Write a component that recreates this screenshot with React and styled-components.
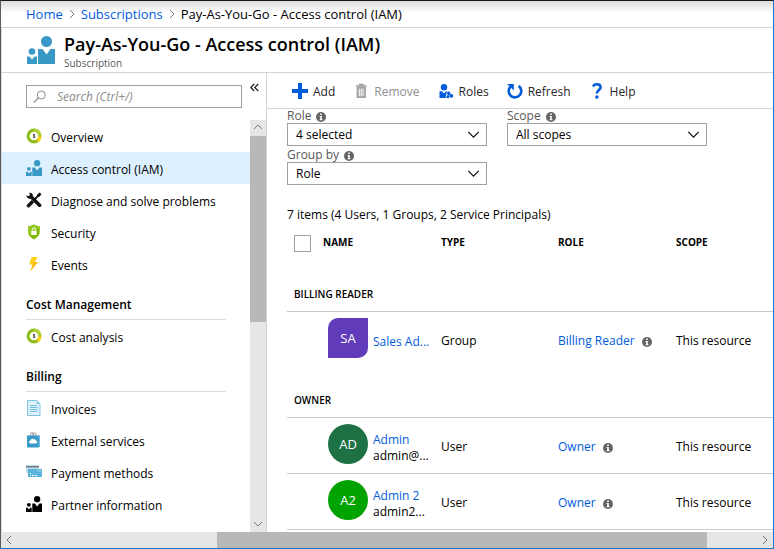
import React from 'react';
import styled, { createGlobalStyle, css } from 'styled-components';

const GlobalStyle = createGlobalStyle`
  *, *::before, *::after { box-sizing: border-box; }
  body {
    margin: 0;
    font-family: "Open Sans", "Noto Sans", sans-serif;
    font-size: 12px;
    line-height: 16px;
    color: #000;
    background: #fff;
  }
  button, input, select { font: inherit; color: inherit; }
  a { color: #015cda; text-decoration: none; }
`;

const Window = styled.div`
  display: flex;
  flex-direction: column;
  height: 100vh;
  border-top: 1px solid #1c161b;
  border-left: 1px solid #5b5b5e;
  border-right: 1px solid #1979ca;
  border-bottom: 1px solid #1979ca;
  background: #fff;
`;

const Breadcrumb = styled.nav`
  display: flex;
  align-items: center;
  gap: 4px;
  flex: none;
  height: 27px;
  padding-left: 25px;
  border-bottom: 1px solid #d4d4d4;
  background: linear-gradient(#dcdcdc, #fff 12px);
  font-size: 13px;
`;

const Header = styled.header`
  display: flex;
  align-items: center;
  gap: 9px;
  flex: none;
  height: 45px;
  padding-left: 25px;
  border-bottom: 1px solid #d4d4d4;
  border-left: 1px solid #d4d4d4;
`;

const Title = styled.h1`
  margin: 0;
  font-size: 18px;
  line-height: 25px;
  font-weight: 600;
`;

const Subtitle = styled.div`
  font-size: 10px;
  line-height: 12px;
  color: #595959;
`;

const Body = styled.div`
  display: flex;
  flex: 1;
  min-height: 0;
  border-left: 1px solid #d4d4d4;
`;

const Sidebar = styled.aside`
  display: flex;
  flex-direction: column;
  flex: none;
  width: 265px;
  border-right: 1px solid #d4d4d4;
`;

const SearchRow = styled.div`
  display: flex;
  align-items: flex-start;
  gap: 5px;
  flex: none;
  height: 47px;
  padding: 12px 5px 0 24px;
`;

const SearchBox = styled.label`
  display: flex;
  align-items: center;
  gap: 10px;
  flex: 1;
  min-width: 0;
  height: 23px;
  padding-left: 6px;
  border: 1px solid #a0a0a0;
`;

const SearchInput = styled.input`
  flex: 1;
  min-width: 0;
  padding: 0;
  border: 0;
  outline: 0;
  background: transparent;
  font-style: italic;
  &::placeholder { color: #8b8b8b; opacity: 1; }
`;

const IconButton = styled.button`
  display: flex;
  align-items: center;
  justify-content: center;
  width: 14px;
  height: 4px;
  padding: 0;
  border: 0;
  background: none;
`;

const MenuArea = styled.div`
  display: flex;
  flex: 1;
  min-height: 0;
`;

const Menu = styled.nav`
  flex: 1;
  min-width: 0;
  overflow: hidden;
`;

const MenuItem = styled.a`
  display: flex;
  align-items: center;
  gap: 9px;
  height: 32px;
  padding-left: 24px;
  color: #000;
  background: ${(p) => (p.$active ? '#dcf0ff' : 'transparent')};
  svg { flex: none; }
  span { padding-top: 4px; }
`;

const MenuHeading = styled.h2`
  height: 40px;
  margin: 0 24px;
  padding-top: 17px;
  font-size: 12px;
  line-height: 16px;
  font-weight: 600;
  &::after {
    content: "";
    display: block;
    margin-top: 6px;
    border-top: 1px solid #d9dadb;
  }
`;

const Scrollbar = styled.div`
  display: flex;
  flex: none;
  flex-direction: ${(p) => (p.$horizontal ? 'row' : 'column')};
  ${(p) => (p.$horizontal ? css`height: 16px;` : css`width: 16px;`)}
  background: #e6e6e6;
`;

const ScrollButton = styled.button`
  display: flex;
  align-items: center;
  justify-content: center;
  flex: none;
  width: 16px;
  height: 16px;
  padding: 0;
  border: 0;
  background: none;
`;

const Space = styled.div`
  flex: ${(p) => p.$grow} 1 0;
`;

const Thumb = styled(Space)`
  background: #b8b8b8;
`;

const Main = styled.main`
  display: flex;
  flex-direction: column;
  flex: 1;
  min-width: 0;
  overflow: hidden;
`;

const Toolbar = styled.div`
  display: flex;
  align-items: center;
  gap: 18px;
  flex: none;
  height: 36px;
  padding-left: 25px;
  border-bottom: 1px solid #d4d4d4;
`;

const Command = styled.button`
  display: flex;
  align-items: center;
  gap: 5px;
  padding: 0;
  border: 0;
  background: none;
  color: #252525;
  white-space: nowrap;
  span { padding-top: 2px; }
  &:disabled { color: #8f8f8f; }
`;

const Filters = styled.form`
  display: grid;
  grid-template-columns: 200px 200px;
  column-gap: 20px;
  flex: none;
  padding-left: 20px;
`;

const Field = styled.div`
  grid-column: ${(p) => p.$column};
  height: 39px;
`;

const FieldLabel = styled.label`
  display: flex;
  align-items: center;
  gap: 5px;
  height: 14px;
  color: #595959;
  svg { margin-top: 2px; }
`;

const SelectBox = styled.div`
  display: grid;
  align-items: center;
  > * { grid-area: 1 / 1; }
  > svg { justify-self: end; margin-right: 7px; pointer-events: none; }
`;

const Select = styled.select`
  appearance: none;
  width: 100%;
  height: 23px;
  padding: 0 24px 0 8px;
  border: 1px solid #a0a0a0;
  border-radius: 0;
  background: #fff;
`;

const Summary = styled.p`
  flex: none;
  margin: 0;
  padding: 20px 0 7px 20px;
`;

const TableWrap = styled.div`
  flex: none;
  padding-left: 20px;
`;

const Table = styled.table`
  width: 100%;
  table-layout: fixed;
  border-collapse: collapse;
  col:nth-child(1) { width: 36px; }
  col:nth-child(2) { width: 118px; }
  col:nth-child(3) { width: 117px; }
  col:nth-child(4) { width: 118px; }
`;

const HeadCell = styled.th`
  height: 31px;
  padding: 4px 0 0;
  text-align: left;
  vertical-align: top;
  font-size: 10px;
  font-weight: 700;
  white-space: nowrap;
`;

const Checkbox = styled.input`
  appearance: none;
  display: block;
  width: 17px;
  height: 17px;
  margin: 1px 0 0 7px;
  border: 1px solid #a0a0a0;
  background: #fff;
`;

const GroupCell = styled.th`
  height: 50px;
  padding: 0 0 9px 7px;
  border-bottom: 1px solid #c8c8c8;
  text-align: left;
  vertical-align: bottom;
  font-size: 10px;
  font-weight: 600;
`;

const Row = styled.tr`
  border-bottom: ${(p) => (p.$line ? '1px solid #c8c8c8' : '0')};
`;

const Cell = styled.td`
  height: 56px;
  padding: 4px 0 0;
  white-space: nowrap;
`;

const NameCell = styled(Cell)`
  padding: 0 0 2px 5px;
`;

const Principal = styled.div`
  display: flex;
  align-items: center;
  gap: 5px;
`;

const PrincipalText = styled.div`
  display: flex;
  flex-direction: column;
  padding-top: 7px;
`;

const Avatar = styled.div`
  display: flex;
  align-items: center;
  justify-content: center;
  flex: none;
  width: 40px;
  height: 40px;
  border-radius: ${(p) => (p.$group ? '10px 0 10px 0' : '50%')};
  background: ${(p) => p.$color};
  color: #fff;
  font-size: 13px;
`;

const RoleLine = styled.div`
  display: flex;
  align-items: center;
  gap: 7px;
  svg { margin-top: 2px; }
`;

function People({ size = 16, color = '#3999c6' }) {
  return (
    <svg width={size} height={size} viewBox="0 0 28 28" fill={color} aria-hidden="true">
      <circle cx="19.5" cy="5.5" r="5.5" />
      <path d="M11 13h4.5l4 5.5 4-5.5H28v15H11z" />
      <circle cx="5" cy="15.5" r="3.3" />
      <path d="M0 20.5h2.5L5 23.5l2.5-3H10V28H0z" />
    </svg>
  );
}

function CostIcon() {
  return (
    <svg width="16" height="16" viewBox="0 0 16 16" aria-hidden="true">
      <circle cx="8" cy="8" r="5.9" fill="#fff" stroke="#8cbf1f" strokeWidth="3.2" />
      <path d="M8 2.1A5.9 5.9 0 0 1 13.9 8" fill="none" stroke="#b2d235" strokeWidth="3.2" />
      <path d="M13.9 8.3a5.9 5.9 0 0 1-2.7 4.6" fill="none" stroke="#fcd116" strokeWidth="3.2" />
      <path d="M9 6.5H7.6v1.5h1.1v1.5H7.2M8.1 5.8v4.4" fill="none" stroke="#444" strokeWidth=".8" />
    </svg>
  );
}

function ToolsIcon() {
  return (
    <svg width="16" height="16" viewBox="0 0 16 16" fill="#111" aria-hidden="true">
      <path d="M.5 3.300 2.500 4.300l1.500-1.300L3.200.8C5.600.3 7.200 2 6.800 4.100L14.800 12c.9.9.9 1.900.2 2.600s-1.900.6-2.700-.2L4.600 6.800C2.400 7.200.3 5.700.5 3.300z" />
      <path d="M15.400 2.300 13.700.6 11.200 2.600l-.3 1.200L7.600 7.100l1.300 1.300 3.300-3.300 1.200-.3z" />
      <path d="m5.700 8 2.400 2.400-4.500 4.600c-.7.700-1.700.7-2.400 0s-.7-1.700 0-2.400z" />
    </svg>
  );
}

function ShieldIcon() {
  return (
    <svg width="16" height="16" viewBox="0 0 16 16" aria-hidden="true">
      <path d="M8 .5c1.700 1 3.600 1.500 5.700 1.500v6c0 3.400-2.600 5.700-5.700 7.500C4.900 13.700 2.300 11.400 2.300 8V2C4.400 2 6.300 1.500 8 .5z" fill="#7fba00" />
      <path d="M8 .5c1.700 1 3.600 1.500 5.700 1.500v1L4 13C2.900 11.700 2.300 10 2.300 8V2C4.400 2 6.300 1.500 8 .5z" fill="#95c91f" />
      <rect x="5.300" y="7" width="5.400" height="4" fill="#fff" />
      <path d="M6.400 7V5.600a1.600 1.600 0 0 1 3.200 0V7" fill="none" stroke="#fff" strokeWidth="1" />
    </svg>
  );
}

function BoltIcon() {
  return (
    <svg width="16" height="16" viewBox="0 0 16 16" aria-hidden="true">
      <path d="M5.500 1h6L8.700 6H12L4.700 15l1.800-6.500H3.200z" fill="#fcd116" />
      <path d="M11.500 1 8.700 6H12L4.700 15l1.800-6.500z" fill="#fbb91a" />
    </svg>
  );
}

function InvoiceIcon() {
  return (
    <svg width="16" height="16" viewBox="0 0 16 16" aria-hidden="true">
      <path d="M1.500.5h9.300l3.200 3.200v11.800H1.500z" fill="#dff1fa" stroke="#7cc4e2" />
      <path d="M10.700.5V4H14z" fill="#7cc4e2" />
      <path d="M4 5.500h7M4 7.500h7.500M4 9.500h7.500M4 11.500h7.500" stroke="#6fc0e0" />
    </svg>
  );
}

function ServicesIcon() {
  return (
    <svg width="16" height="16" viewBox="0 0 16 16" aria-hidden="true">
      <path d="M4.500 4V2.300C4.500.3 7.500.3 7.500 2.300V4M7 4V2.300c0-2 3-2 3 0V4" fill="none" stroke="#8a8a8a" strokeWidth="1" />
      <path d="M1 3.500h13v11l-1.500 1H1z" fill="#3999c6" />
      <path d="M12.500 3.500H14v11l-1.500 1z" fill="#6bb7da" />
      <path d="M4.700 11.500a1.500 1.500 0 0 1-.2-3A2.300 2.300 0 0 1 8.600 7.600a1.600 1.600 0 0 1 1.800 1.400 1.300 1.300 0 0 1-.2 2.500z" fill="#fff" />
    </svg>
  );
}

function CardsIcon() {
  return (
    <svg width="16" height="16" viewBox="0 0 16 16" aria-hidden="true">
      <path d="M0 1h13v8H0z" fill="#b5dff0" />
      <path d="M0 2h13v1.500H0z" fill="#7a7a7a" />
      <path d="M2 5h14v8H2z" fill="#59b4d9" />
      <path d="M4 9.500h1M4 11.500h1M6 11.500h2M9 11.500h2" stroke="#fff" strokeWidth="1" />
      <path d="M11 6h4v1.500h-4z" fill="#8ccce6" />
    </svg>
  );
}

function AddIcon() {
  return (
    <svg width="16" height="16" viewBox="0 0 16 16" aria-hidden="true">
      <path d="M6 0h4v6h6v4h-6v6H6v-6H0V6h6z" fill="#015cda" />
    </svg>
  );
}

function TrashIcon() {
  return (
    <svg width="16" height="16" viewBox="0 0 16 16" fill="none" stroke="#a0a0a0" aria-hidden="true">
      <path d="M3 3h10.500M6.500 3V1.500h3.500V3" strokeWidth="1.400" />
      <path d="M4.200 4.500v9.800h8.100V4.500z" fill="#b4b4b4" strokeWidth="1.200" />
      <path d="M6.500 6v7M8.250 6v7M10 6v7" stroke="#fff" strokeWidth=".8" />
    </svg>
  );
}

function RolesIcon() {
  return (
    <svg width="16" height="16" viewBox="0 0 16 16" fill="#015cda" aria-hidden="true">
      <circle cx="6" cy="4.200" r="3.200" />
      <path d="M1.500 8.200h2.600L6 10.400l2-2.200h1.200L8.400 10.300v1.400L7.600 13.500l.6 1.500H1.500z" />
      <circle cx="10.700" cy="10.200" r="1.700" />
      <circle cx="13.300" cy="12.800" r="1.900" />
      <circle cx="9.900" cy="13.700" r="1.500" />
      <path d="m10.700 10.200 2.600 2.600M9.900 13.700l.8-3.300" stroke="#015cda" />
    </svg>
  );
}

function RefreshIcon() {
  return (
    <svg width="16" height="16" viewBox="0 0 16 16" aria-hidden="true">
      <path d="M11.600 2.900A6.300 6.300 0 1 1 3.600 3.500" fill="none" stroke="#015cda" strokeWidth="2.600" />
      <path d="M0 1h6.800v6.500L4.800 5.500 2.900 3.500z" fill="#015cda" />
    </svg>
  );
}

function HelpIcon() {
  return (
    <svg width="16" height="16" viewBox="0 0 16 16" aria-hidden="true">
      <path d="M4.300 3.600C4.700 1.900 6 1.300 7.900 1.300c2.200 0 3.700 1.200 3.700 3 0 2.900-3.700 2.700-3.700 6.200" fill="none" stroke="#015cda" strokeWidth="2.600" />
      <circle cx="7.900" cy="14" r="1.800" fill="#015cda" />
    </svg>
  );
}

function InfoIcon() {
  return (
    <svg width="10" height="10" viewBox="0 0 10 10" aria-hidden="true">
      <circle cx="5" cy="5" r="5" fill="#646464" />
      <path d="M4.200 1.500h1.600v1.500H4.200zM3.600 4h2.200v3.300h.7v1H3.600v-1h.6V5h-.6z" fill="#fff" />
    </svg>
  );
}

function SearchIcon() {
  return (
    <svg width="14" height="14" viewBox="0 0 14 14" fill="none" stroke="#8b8b8b" aria-hidden="true">
      <circle cx="8.300" cy="5" r="4" />
      <path d="M5.400 7.900.8 12.600" strokeWidth="1.300" />
    </svg>
  );
}

const chevrons = {
  up: 'M1 6l4-4 4 4',
  down: 'M1 3l4 4 4-4',
  left: 'M7 1 3 5l4 4',
  right: 'M3 1l4 4-4 4',
};

function Chevron({ dir, size = 10, color = '#777', width = 1 }) {
  return (
    <svg width={size} height={size} viewBox="0 0 10 10" fill="none" stroke={color} strokeWidth={width} aria-hidden="true">
      <path d={chevrons[dir]} />
    </svg>
  );
}

function CollapseIcon() {
  return (
    <svg width="9" height="9" viewBox="0 0 9 9" fill="none" stroke="#111" strokeWidth="1.200" aria-hidden="true">
      <path d="M4.300.8.8 4.500l3.500 3.700M8.300.8 4.800 4.500l3.500 3.700" />
    </svg>
  );
}

const menu = [
  {
    items: [
      { label: 'Overview', icon: <CostIcon /> },
      { label: 'Access control (IAM)', icon: <People />, active: true },
      { label: 'Diagnose and solve problems', icon: <ToolsIcon /> },
      { label: 'Security', icon: <ShieldIcon /> },
      { label: 'Events', icon: <BoltIcon /> },
    ],
  },
  { title: 'Cost Management', items: [{ label: 'Cost analysis', icon: <CostIcon /> }] },
  {
    title: 'Billing',
    items: [
      { label: 'Invoices', icon: <InvoiceIcon /> },
      { label: 'External services', icon: <ServicesIcon /> },
      { label: 'Payment methods', icon: <CardsIcon /> },
      { label: 'Partner information', icon: <People color="#000" /> },
    ],
  },
];

const commands = [
  { label: 'Add', icon: <AddIcon /> },
  { label: 'Remove', icon: <TrashIcon />, disabled: true },
  { label: 'Roles', icon: <RolesIcon /> },
  { label: 'Refresh', icon: <RefreshIcon /> },
  { label: 'Help', icon: <HelpIcon /> },
];

const filters = [
  { id: 'role', label: 'Role', value: '4 selected', column: 1 },
  { id: 'scope', label: 'Scope', value: 'All scopes', column: 2 },
  { id: 'group-by', label: 'Group by', value: 'Role', column: 1 },
];

const groups = [
  {
    title: 'BILLING READER',
    rows: [
      { initials: 'SA', color: '#603cba', group: true, name: 'Sales Ad...', type: 'Group', role: 'Billing Reader', scope: 'This resource' },
    ],
  },
  {
    title: 'OWNER',
    rows: [
      { initials: 'AD', color: '#1e7145', name: 'Admin', detail: 'admin@...', type: 'User', role: 'Owner', scope: 'This resource', line: true },
      { initials: 'A2', color: '#00a300', name: 'Admin 2', detail: 'admin2...', type: 'User', role: 'Owner', scope: 'This resource', line: true },
    ],
  },
];

export default function App() {
  return (
    <>
      <GlobalStyle />
      <Window>
        <Breadcrumb aria-label="Breadcrumb">
          <a href="#home">Home</a>
          <Chevron dir="right" />
          <a href="#subscriptions">Subscriptions</a>
          <Chevron dir="right" />
          <span>Pay-As-You-Go - Access control (IAM)</span>
        </Breadcrumb>
        <Header>
          <People size={28} />
          <div>
            <Title>Pay-As-You-Go - Access control (IAM)</Title>
            <Subtitle>Subscription</Subtitle>
          </div>
        </Header>
        <Body>
          <Sidebar>
            <SearchRow>
              <SearchBox>
                <SearchIcon />
                <SearchInput type="text" aria-label="Search menu" placeholder="Search (Ctrl+/)" />
              </SearchBox>
              <IconButton type="button" aria-label="Collapse menu"><CollapseIcon /></IconButton>
            </SearchRow>
            <MenuArea>
              <Menu aria-label="Subscription">
                {menu.map((section, i) => (
                  <React.Fragment key={i}>
                    {section.title && <MenuHeading>{section.title}</MenuHeading>}
                    {section.items.map((item) => (
                      <MenuItem key={item.label} href="#" $active={item.active}>
                        {item.icon}
                        <span>{item.label}</span>
                      </MenuItem>
                    ))}
                  </React.Fragment>
                ))}
              </Menu>
              <Scrollbar>
                <ScrollButton type="button" aria-label="Scroll up"><Chevron dir="up" /></ScrollButton>
                <Thumb $grow={186} />
                <Space $grow={194} />
                <ScrollButton type="button" aria-label="Scroll down"><Chevron dir="down" /></ScrollButton>
              </Scrollbar>
            </MenuArea>
          </Sidebar>
          <Main>
            <Toolbar>
              {commands.map((c) => (
                <Command key={c.label} type="button" disabled={c.disabled}>
                  {c.icon}
                  <span>{c.label}</span>
                </Command>
              ))}
            </Toolbar>
            <Filters>
              {filters.map((f) => (
                <Field key={f.id} $column={f.column}>
                  <FieldLabel htmlFor={f.id}>{f.label}<InfoIcon /></FieldLabel>
                  <SelectBox>
                    <Select id={f.id} defaultValue={f.value}>
                      <option>{f.value}</option>
                    </Select>
                    <Chevron dir="down" size={13} color="#111" />
                  </SelectBox>
                </Field>
              ))}
            </Filters>
            <Summary>7 items (4 Users, 1 Groups, 2 Service Principals)</Summary>
            <TableWrap>
              <Table>
                <colgroup><col /><col /><col /><col /><col /></colgroup>
                <thead>
                  <tr>
                    <HeadCell scope="col"><Checkbox type="checkbox" aria-label="Select all" /></HeadCell>
                    <HeadCell scope="col">NAME</HeadCell>
                    <HeadCell scope="col">TYPE</HeadCell>
                    <HeadCell scope="col">ROLE</HeadCell>
                    <HeadCell scope="col">SCOPE</HeadCell>
                  </tr>
                </thead>
                {groups.map((g) => (
                  <tbody key={g.title}>
                    <tr><GroupCell scope="rowgroup" colSpan={5}>{g.title}</GroupCell></tr>
                    {g.rows.map((r) => (
                      <Row key={r.name} $line={r.line}>
                        <Cell />
                        <NameCell>
                          <Principal>
                            <Avatar $color={r.color} $group={r.group}>{r.initials}</Avatar>
                            <PrincipalText>
                              <a href="#">{r.name}</a>
                              {r.detail && <span>{r.detail}</span>}
                            </PrincipalText>
                          </Principal>
                        </NameCell>
                        <Cell>{r.type}</Cell>
                        <Cell>
                          <RoleLine><a href="#">{r.role}</a><InfoIcon /></RoleLine>
                        </Cell>
                        <Cell>{r.scope}</Cell>
                      </Row>
                    ))}
                  </tbody>
                ))}
              </Table>
            </TableWrap>
          </Main>
        </Body>
        <Scrollbar $horizontal>
          <ScrollButton type="button" aria-label="Scroll left"><Chevron dir="left" /></ScrollButton>
          <Space $grow={200} />
          <Thumb $grow={490} />
          <Space $grow={50} />
          <ScrollButton type="button" aria-label="Scroll right"><Chevron dir="right" /></ScrollButton>
        </Scrollbar>
      </Window>
    </>
  );
}
